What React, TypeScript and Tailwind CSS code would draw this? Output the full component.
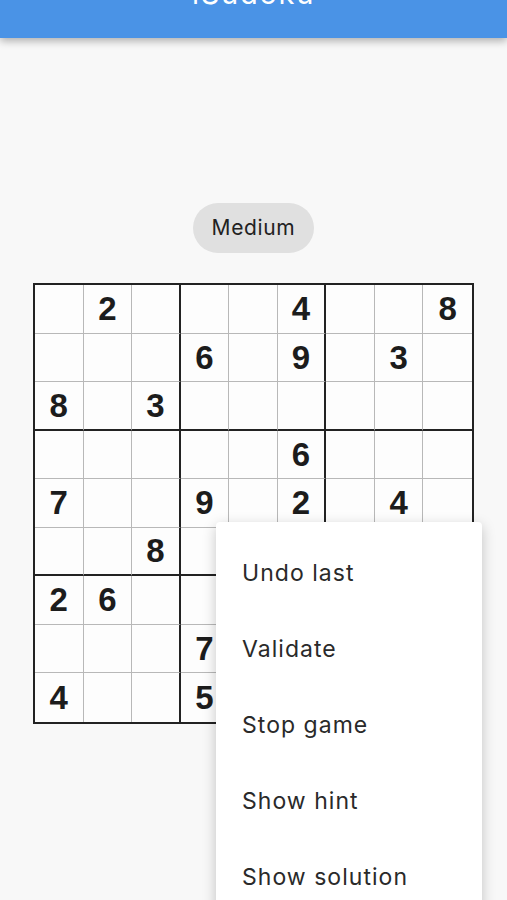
import React from 'react';

const board: (number | null)[][] = [
  [null, 2, null, null, null, 4, null, null, 8],
  [null, null, null, 6, null, 9, null, 3, null],
  [8, null, 3, null, null, null, null, null, null],
  [null, null, null, null, null, 6, null, null, null],
  [7, null, null, 9, null, 2, null, 4, null],
  [null, null, 8, null, null, null, null, null, null],
  [2, 6, null, null, null, null, null, null, null],
  [null, null, null, 7, null, null, null, null, null],
  [4, null, null, 5, null, null, null, null, null],
];

const menuItems = ['Undo last', 'Validate', 'Stop game', 'Show hint', 'Show solution'];

function Cell({ value, row, col }: { value: number | null; row: number; col: number }) {
  const right =
    col === 8 ? '' : col % 3 === 2 ? 'border-r-2 border-r-[#222]' : 'border-r border-r-[#b8b8b8]';
  const bottom =
    row === 8 ? '' : row % 3 === 2 ? 'border-b-2 border-b-[#222]' : 'border-b border-b-[#b8b8b8]';
  return (
    <div
      className={`flex items-center justify-center bg-[#fdfdfd] text-[33px] font-bold text-[#1c1c1c] ${right} ${bottom}`}
      style={{ fontFamily: '"Liberation Sans", Arial, sans-serif' }}
    >
      {value ?? ''}
    </div>
  );
}

export default function App() {
  return (
    <div className="relative min-h-[900px] overflow-hidden bg-[#f8f8f8]" style={{ fontFamily: 'Inter, "Noto Sans", sans-serif' }}>
      {/* App bar */}
      <header className="relative z-10 flex h-[38px] justify-center overflow-hidden bg-[#4a93e6] shadow-[0_3px_8px_rgba(0,0,0,0.3)]">
        <h1 className="-mt-[21px] text-[29px] leading-none tracking-[0.06em] text-white">iSudoku</h1>
      </header>

      <main className="flex flex-col items-center">
        {/* Difficulty chip */}
        <div className="mt-[165px] flex h-[50px] items-center rounded-full bg-[#e0e0e0] px-[19px] text-[21px] tracking-[0.03em] text-[#222]">
          Medium
        </div>

        {/* Board */}
        <div className="mt-[30px] grid h-[441px] w-[441px] grid-cols-9 grid-rows-9 border-2 border-[#222]">
          {board.map((r, ri) => r.map((v, ci) => <Cell key={`${ri}-${ci}`} value={v} row={ri} col={ci} />))}
        </div>
      </main>

      {/* Popup menu */}
      <div className="absolute left-[216px] top-[522px] h-[420px] w-[266px] rounded-[4px] bg-white pt-[13px] shadow-[0_4px_14px_rgba(0,0,0,0.22)]">
        {menuItems.map((item) => (
          <div key={item} className="flex h-[76px] items-center px-[26px] text-[23px] tracking-[0.045em] text-[#2a2a2a]">
            {item}
          </div>
        ))}
      </div>
    </div>
  );
}
